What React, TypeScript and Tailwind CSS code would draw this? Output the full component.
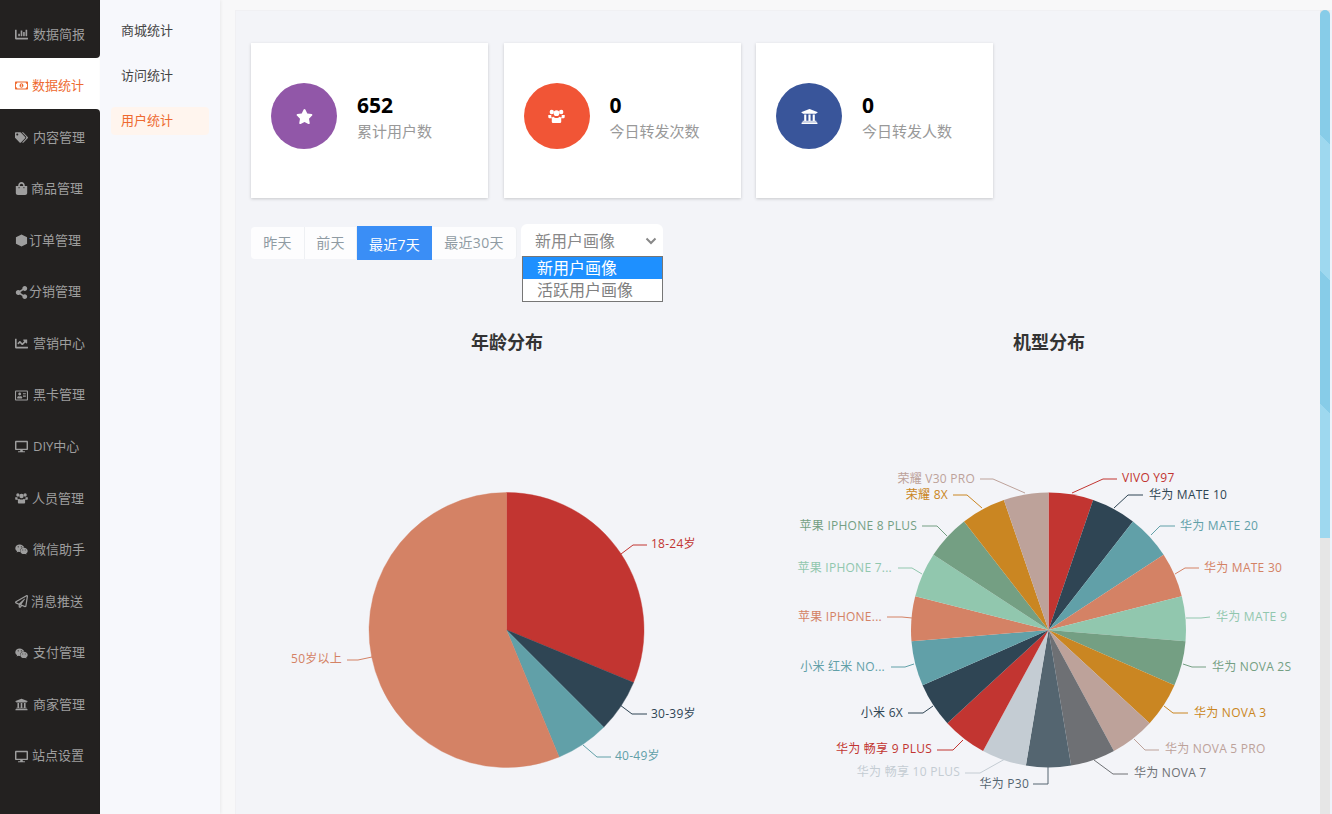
import type { SVGProps } from "react";
import {
  FaChartBar,
  FaChartLine,
  FaDesktop,
  FaRegAddressCard,
  FaRegMoneyBillAlt,
  FaRegPaperPlane,
  FaShareAlt,
  FaShoppingBag,
  FaStar,
  FaTags,
  FaUniversity,
  FaWeixin,
} from "react-icons/fa";

type IconProps = SVGProps<SVGSVGElement>;
type MenuItem = { label: string; icon: (p: IconProps) => React.ReactNode; box: string; active?: boolean; before?: boolean; after?: boolean };

function Hexagon(props: IconProps) {
  return (
    <svg viewBox="0 0 14 14" fill="currentColor" {...props}>
      <path d="M7 .5 13 3.5v7L7 13.5 1 10.5v-7z" />
    </svg>
  );
}

function People(props: IconProps) {
  return (
    <svg viewBox="0 0 18 16" fill="currentColor" {...props}>
      <circle cx="4" cy="3.2" r="2.3" />
      <circle cx="14" cy="3.2" r="2.3" />
      <circle cx="9" cy="4.5" r="3" />
      <path d="M.3 6.3h3.2c-.3 1.5.2 2.7 1.2 3.6H2.2C1 9.9.3 9.3.3 8.2zM17.7 6.3h-3.2c.3 1.5-.2 2.7-1.2 3.6h2.5c1.2 0 1.9-.6 1.9-1.7z" />
      <path d="M5.6 8.2C6.5 9 7.7 9.500 9 9.500s2.500-.5 3.400-1.300c1 .2 1.600 1 1.600 2.100v3.200c0 1-.7 1.500-1.700 1.500H5.700C4.700 15 4 14.500 4 13.500v-3.200c0-1.100.6-1.900 1.600-2.100z" />
    </svg>
  );
}

const menu: MenuItem[] = [
  { label: "数据简报", icon: FaChartBar, box: "w-[18px]", before: true },
  { label: "数据统计", icon: FaRegMoneyBillAlt, box: "w-[17px]", active: true },
  { label: "内容管理", icon: FaTags, box: "w-[18px]", after: true },
  { label: "商品管理", icon: FaShoppingBag, box: "w-[16px]" },
  { label: "订单管理", icon: Hexagon, box: "w-[14px]" },
  { label: "分销管理", icon: FaShareAlt, box: "w-[14px]" },
  { label: "营销中心", icon: FaChartLine, box: "w-[18px]" },
  { label: "黑卡管理", icon: FaRegAddressCard, box: "w-[18px]" },
  { label: "DIY中心", icon: FaDesktop, box: "w-[18px]" },
  { label: "人员管理", icon: People, box: "w-[17px]" },
  { label: "微信助手", icon: FaWeixin, box: "w-[18px]" },
  { label: "消息推送", icon: FaRegPaperPlane, box: "w-[16px]" },
  { label: "支付管理", icon: FaWeixin, box: "w-[18px]" },
  { label: "商家管理", icon: FaUniversity, box: "w-[18px]" },
  { label: "站点设置", icon: FaDesktop, box: "w-[17px]" },
];

const stats = [
  { value: "652", label: "累计用户数", icon: FaStar, bg: "bg-[#9157a8]" },
  { value: "0", label: "今日转发次数", icon: People, bg: "bg-[#f15536]" },
  { value: "0", label: "今日转发人数", icon: FaUniversity, bg: "bg-[#39559a]" },
];

const tabs = [
  { label: "昨天", w: "w-[54px] rounded-l-[4px]" },
  { label: "前天", w: "w-[52px]" },
  { label: "最近7天", w: "w-[75px]", active: true },
  { label: "最近30天", w: "w-[85px] rounded-r-[4px]" },
];

const palette = ["#c23531", "#2f4554", "#61a0a8", "#d48265", "#91c7ae", "#749f83", "#ca8622", "#bda29a", "#6e7074", "#546570", "#c4ccd3"];

function slice(cx: number, cy: number, r: number, from: number, to: number) {
  const pt = (deg: number) => {
    const a = (deg * Math.PI) / 180;
    return `${(cx + r * Math.sin(a)).toFixed(2)} ${(cy - r * Math.cos(a)).toFixed(2)}`;
  };
  return `M${cx} ${cy}L${pt(from)}A${r} ${r} 0 ${to - from > 180 ? 1 : 0} 1 ${pt(to)}Z`;
}

type Label = { text: string; x: number; y: number; end?: boolean; line: string; color: string };

const ageLabels: Label[] = [
  { text: "18-24岁", x: 651, y: 544, line: "621,554 633,545 647,545", color: "#c23531" },
  { text: "30-39岁", x: 651, y: 714, line: "620,705 632,714 647,714", color: "#2f4554" },
  { text: "40-49岁", x: 615, y: 756, line: "583,745 597,757 611,757", color: "#61a0a8" },
  { text: "50岁以上", x: 342, y: 659, end: true, line: "372,657 358,660 347,660", color: "#d48265" },
];

const phoneLabels: Label[] = [
  { text: "VIVO Y97", x: 1122, y: 478, line: "1072,493 1103,479 1117,479", color: palette[0] },
  { text: "华为 MATE 10", x: 1149, y: 495, line: "1114,508 1128,495 1143,495", color: palette[1] },
  { text: "华为 MATE 20", x: 1180, y: 526, line: "1151,535 1160,526 1175,526", color: palette[2] },
  { text: "华为 MATE 30", x: 1204, y: 568, line: "1175,574 1185,568 1199,568", color: palette[3] },
  { text: "华为 MATE 9", x: 1216, y: 617, line: "1186,618 1201,618 1210,617", color: palette[4] },
  { text: "华为 NOVA 2S", x: 1212, y: 667, line: "1183,664 1192,667 1206,667", color: palette[5] },
  { text: "华为 NOVA 3", x: 1194, y: 713, line: "1164,706 1173,713 1188,713", color: palette[6] },
  { text: "华为 NOVA 5 PRO", x: 1165, y: 749, line: "1134,739 1145,750 1159,750", color: palette[7] },
  { text: "华为 NOVA 7", x: 1134, y: 773, line: "1094,760 1113,774 1128,774", color: palette[8] },
  { text: "华为 P30", x: 1029, y: 784, end: true, line: "1048,767 1048,784 1033,784", color: palette[9] },
  { text: "华为 畅享 10 PLUS", x: 960, y: 772, end: true, line: "1005,759 980,773 965,773", color: palette[10] },
  { text: "华为 畅享 9 PLUS", x: 932, y: 749, end: true, line: "963,740 953,750 937,750", color: palette[0] },
  { text: "小米 6X", x: 903, y: 713, end: true, line: "933,706 923,713 908,713", color: palette[1] },
  { text: "小米 红米 NO...", x: 885, y: 667, end: true, line: "914,664 905,667 891,667", color: palette[2] },
  { text: "苹果 IPHONE...", x: 882, y: 617, end: true, line: "912,618 902,617 887,617", color: palette[3] },
  { text: "苹果 IPHONE 7...", x: 892, y: 568, end: true, line: "922,574 912,568 898,568", color: palette[4] },
  { text: "苹果 IPHONE 8 PLUS", x: 917, y: 526, end: true, line: "947,536 937,526 922,526", color: palette[5] },
  { text: "荣耀 8X", x: 948, y: 495, end: true, line: "982,508 967,495 953,495", color: palette[6] },
  { text: "荣耀 V30 PRO", x: 975, y: 479, end: true, line: "1025,493 993,479 980,479", color: palette[7] },
];

function Labels({ items }: { items: Label[] }) {
  return (
    <>
      {items.map((l) => (
        <g key={l.text}>
          <polyline points={l.line} fill="none" stroke={l.color} strokeWidth="1" />
          <text x={l.x} y={l.y - 1} fontSize="12" fill={l.color} textAnchor={l.end ? "end" : "start"} dominantBaseline="central" className="tracking-[0.25px]">
            {l.text}
          </text>
        </g>
      ))}
    </>
  );
}

function AgeChart() {
  const parts = [
    [0, 112.5, palette[0]],
    [112.5, 135, palette[1]],
    [135, 157.5, palette[2]],
    [157.5, 360, palette[3]],
  ] as const;
  return (
    <svg viewBox="236 356 542 458" className="h-[458px] w-full">
      {parts.map(([from, to, color]) => (
        <path key={color} d={slice(506.5, 630, 137.5, from, to)} fill={color} stroke={color} strokeWidth="0.4" />
      ))}
      <Labels items={ageLabels} />
    </svg>
  );
}

function PhoneChart() {
  const step = 360 / 19;
  return (
    <svg viewBox="778 356 542 458" className="h-[458px] w-full">
      {phoneLabels.map((l, i) => (
        <path key={l.text} d={slice(1048.5, 630, 137.5, i * step, (i + 1) * step)} fill={l.color} />
      ))}
      <Labels items={phoneLabels} />
    </svg>
  );
}

export default function App() {
  return (
    <div className="flex h-screen overflow-hidden bg-[#f8f8f9] font-['Open_Sans','Noto_Sans_CJK_SC',sans-serif]">
      {/* main menu */}
      <aside className="flex w-[100px] shrink-0 flex-col bg-white">
        <div className="h-[6px] bg-[#232120]" />
        {menu.map((m) => {
          const Icon = m.icon;
          return (
            <div
              key={m.label}
              className={`flex h-[51.57px] items-center pt-[5px] pl-[15px] text-[13px] ${
                m.active ? "bg-white text-[#ee6a30]" : "bg-[#232120] text-[#9e9e9e]"
              } ${m.before ? "rounded-br-[4px]" : ""} ${m.after ? "rounded-tr-[4px]" : ""}`}
            >
              <span className={`${m.box} shrink-0`}>
                <Icon className="h-[13px] w-[13px]" />
              </span>
              {m.label}
            </div>
          );
        })}
        <div className="flex-1 bg-[#232120]" />
      </aside>

      {/* sub menu */}
      <nav className="flex w-[120px] shrink-0 flex-col gap-[17px] bg-[#f7f8fc] px-[11px] pt-[17px] text-[13px] text-[#444] shadow-[1px_0_3px_rgba(0,0,0,0.06)]">
        <div className="flex h-[28px] items-center pl-[10px]">商城统计</div>
        <div className="flex h-[28px] items-center pl-[10px]">访问统计</div>
        <div className="flex h-[28px] items-center rounded-[4px] bg-[#fff5ee] pl-[10px] text-[#ee6a30]">用户统计</div>
      </nav>

      {/* content */}
      <div className="flex min-w-0 flex-1 pt-[10px] pl-[15px]">
        <main className="min-w-0 flex-1 border-t border-l border-[#f0f0f3] bg-[#f3f4f8] pt-[32px]">
          <div className="flex gap-[15.5px] pl-[15px]">
            {stats.map((s) => {
              const Icon = s.icon;
              return (
                <div key={s.label} className="flex h-[155px] w-[237px] items-start gap-[20px] bg-white pt-[40px] pl-[20px] shadow-[0_1px_3px_rgba(0,0,0,0.18)]">
                  <div className={`flex h-[66px] w-[66px] items-center justify-center rounded-full text-white ${s.bg}`}>
                    <Icon className="h-[17px] w-[17px]" />
                  </div>
                  <div className="pt-[9px]">
                    <div className="text-[21px] leading-[26px] font-bold text-black">{s.value}</div>
                    <div className="text-[15px] leading-[26px] text-[#999]">{s.label}</div>
                  </div>
                </div>
              );
            })}
          </div>

          <div className="mt-[26px] flex items-start pl-[15px]">
            <div className="mt-[2px] flex tracking-[0.3px]">
              {tabs.map((t) =>
                t.active ? (
                  <div key={t.label} className={`${t.w} flex h-[34px] items-center justify-center pt-[2px] text-[14px] text-white bg-[#3a8ef6]`}>
                    {t.label}
                  </div>
                ) : (
                  <div key={t.label} className={`${t.w} mt-[1px] flex h-[32px] items-center justify-center border-r border-[#eef0f3] bg-[#fdfdfe] pb-[2px] text-[14px] text-[#8f9ba3]`}>
                    {t.label}
                  </div>
                ),
              )}
            </div>
            <div className="relative ml-[4px] flex h-[32px] w-[142px] items-center justify-between rounded-t-[6px] bg-white pt-[1px] pr-[6px] pl-[14px] text-[16px] text-[#888]">
              新用户画像
              <svg viewBox="0 0 12 8" className="h-[8px] w-[12px]">
                <polyline points="1.5,1.5 6,6 10.5,1.5" fill="none" stroke="#888" strokeWidth="2" />
              </svg>
              <div className="absolute top-[32px] left-[1px] w-[141px] border border-[#767676] bg-white text-[16px] leading-[22px] text-[#808080]">
                <div className="bg-[#1e90ff] pl-[14px] text-white">新用户画像</div>
                <div className="pl-[14px]">活跃用户画像</div>
              </div>
            </div>
          </div>

          <div className="mt-[69px] flex">
            <div className="w-1/2">
              <h2 className="h-[27px] text-center text-[18px] leading-[26px] font-bold text-[#333]">年龄分布</h2>
              <AgeChart />
            </div>
            <div className="w-1/2">
              <h2 className="h-[27px] text-center text-[18px] leading-[26px] font-bold text-[#333]">机型分布</h2>
              <PhoneChart />
            </div>
          </div>
        </main>

        {/* scrollbar */}
        <div className="flex w-[12px] shrink-0">
          <div className="flex w-[10px] flex-col bg-[#e6e6e6]">
            <div className="h-[528px] rounded-t-[5px] bg-[linear-gradient(225deg,#87cce8_95px,#9ed8ef_95px,#9ed8ef_191px,#87cce8_191px,#87cce8_285px,#9ed8ef_285px)]" />
          </div>
          <div className="w-[2px] bg-[#eef3fa]" />
        </div>
      </div>
    </div>
  );
}
